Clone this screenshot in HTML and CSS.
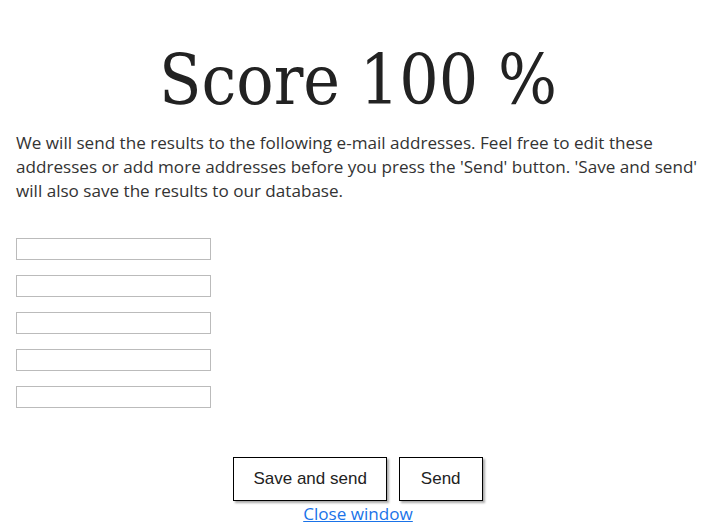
FILE: index.html
```html
<!DOCTYPE html>
<html>
<head>
<meta charset="utf-8">
<link rel="stylesheet" href="styles.css">
</head>
<body>
<div class="page">
  <h1 class="score">Score 100 %</h1>
  <p class="intro">We will send the results to the following e-mail addresses. Feel free to edit these addresses or add more addresses before you press the 'Send' button. 'Save and send' will also save the results to our database.</p>
  <div class="emails">
    <input class="email" type="text">
    <input class="email" type="text">
    <input class="email" type="text">
    <input class="email" type="text">
    <input class="email" type="text">
  </div>
  <div class="actions">
    <button class="btn btn-wide">Save and send</button>
    <button class="btn">Send</button>
  </div>
  <div class="close"><a href="#">Close window</a></div>
</div>
</body>
</html>
```
FILE: styles.css
```css
html, body {
  margin: 0;
  padding: 0;
  background: #fff;
}
.page {
  padding: 0 16px;
  font-family: "Open Sans", "Liberation Sans", sans-serif;
  color: #333;
}
.score {
  font-family: "DejaVu Serif", "Liberation Serif", serif;
  font-stretch: condensed;
  font-weight: normal;
  font-size: 69px;
  line-height: 1;
  text-align: center;
  color: #222;
  margin: 46px 0 0;
}
.intro {
  font-size: 17.1px;
  line-height: 24px;
  margin: 16px 0 0;
}
.emails {
  display: flex;
  flex-direction: column;
  gap: 15px;
  margin-top: 35px;
}
.email {
  width: 195px;
  height: 22px;
  box-sizing: border-box;
  border: 1px solid #bbb;
  margin: 0;
  padding: 0;
}
.actions {
  display: flex;
  justify-content: center;
  gap: 12px;
  margin-top: 49px;
}
.btn {
  font-family: "Liberation Sans", Arial, sans-serif;
  font-size: 17px;
  color: #222;
  background: #fff;
  border: 1px solid #000;
  box-shadow: 2px 2px 2px #aaa;
  height: 44px;
  padding: 0 21px;
}
.btn-wide {
  padding: 0 19px;
}
.close {
  text-align: center;
  font-size: 17.1px;
  line-height: 18px;
  margin-top: 4px;
}
.close a {
  color: #1a73e8;
}
```
